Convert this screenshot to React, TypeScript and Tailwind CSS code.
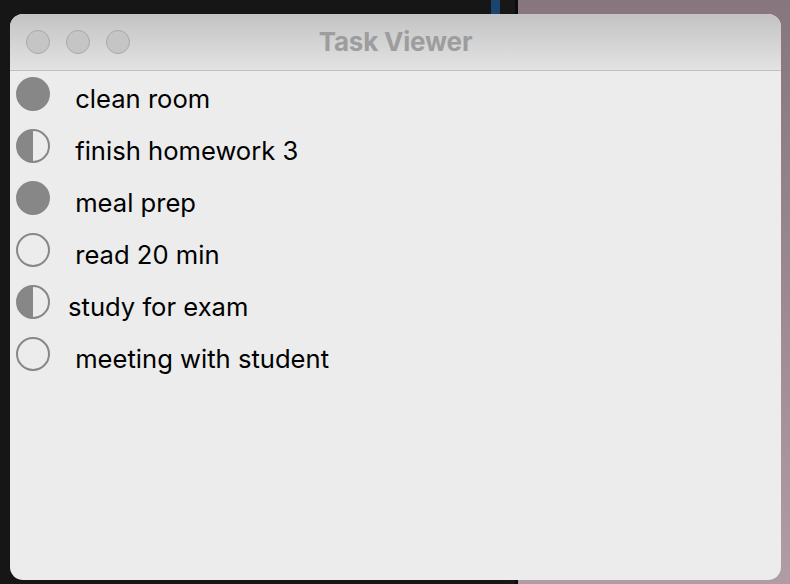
import React from 'react'

type State = 'full' | 'half' | 'empty'

interface Task {
    label: string
    state: State
}

const tasks: Task[] = [
    { label: ' clean room', state: 'full' },
    { label: ' finish homework 3', state: 'half' },
    { label: ' meal prep', state: 'full' },
    { label: ' read 20 min', state: 'empty' },
    { label: 'study for exam', state: 'half' },
    { label: ' meeting with student', state: 'empty' },
]

function StatusIcon({ state }: { state: State }) {
    return (
        <svg width="34" height="34" viewBox="0 0 34 34" className="shrink-0">
            {state === 'full' && <circle cx="17" cy="17" r="17" fill="#878787" />}
            {state === 'half' && (
                <>
                    <path d="M17 1 A16 16 0 0 0 17 33 Z" fill="#878787" />
                    <circle cx="17" cy="17" r="16" fill="none" stroke="#878787" strokeWidth="2" />
                </>
            )}
            {state === 'empty' && <circle cx="17" cy="17" r="16" fill="none" stroke="#878787" strokeWidth="2" />}
        </svg>
    )
}

export default function App() {
    return (
        <div className="relative w-[790px] h-[584px] overflow-hidden bg-[#161616]">
            {/* desktop behind the window */}
            <div className="flex h-full">
                <div className="w-[491px] bg-[#161616]" />
                <div className="w-[9px] flex flex-col">
                    <div className="h-[14px] bg-[#1c4470]" />
                    <div className="flex-1 bg-[#161616]" />
                </div>
                <div className="w-[15px] bg-[#171717]" />
                <div className="w-[3px] bg-[#0b0b0b]" />
                <div className="flex-1 bg-gradient-to-b from-[#87767d] to-[#b09ca5]" />
            </div>

            {/* window */}
            <div className="absolute left-[10px] top-[14px] w-[771px] h-[566px] rounded-[13px] overflow-hidden bg-[#ececec] flex flex-col">
                {/* title bar */}
                <div className="relative h-[57px] shrink-0 bg-gradient-to-b from-[#c3c3c3] to-[#e3e3e3] border-b border-[#c0c0c0] flex items-center justify-center">
                    <div className="absolute left-[16px] top-[16px] flex gap-[16px]">
                        <div className="w-[24px] h-[24px] rounded-full bg-[#c5c5c5] border border-[#a9a9a9]" />
                        <div className="w-[24px] h-[24px] rounded-full bg-[#c5c5c5] border border-[#a9a9a9]" />
                        <div className="w-[24px] h-[24px] rounded-full bg-[#c5c5c5] border border-[#a9a9a9]" />
                    </div>
                    <span className="font-['Inter','Liberation_Sans',sans-serif] font-bold text-[26px] text-[#9d9d9d] tracking-[-0.2px] -mt-[2px]">
                        Task Viewer
                    </span>
                </div>

                {/* tasks */}
                <div className="flex flex-col pt-[6px] pl-[6px]">
                    {tasks.map(task => (
                        <div key={task.label} className="flex items-start h-[52px] gap-[18px]">
                            <StatusIcon state={task.state} />
                            <span className="whitespace-pre font-['Inter','Liberation_Sans',sans-serif] text-[25.6px] leading-[34px] text-black mt-[5px]">
                                {task.label}
                            </span>
                        </div>
                    ))}
                </div>
            </div>
        </div>
    )
}
